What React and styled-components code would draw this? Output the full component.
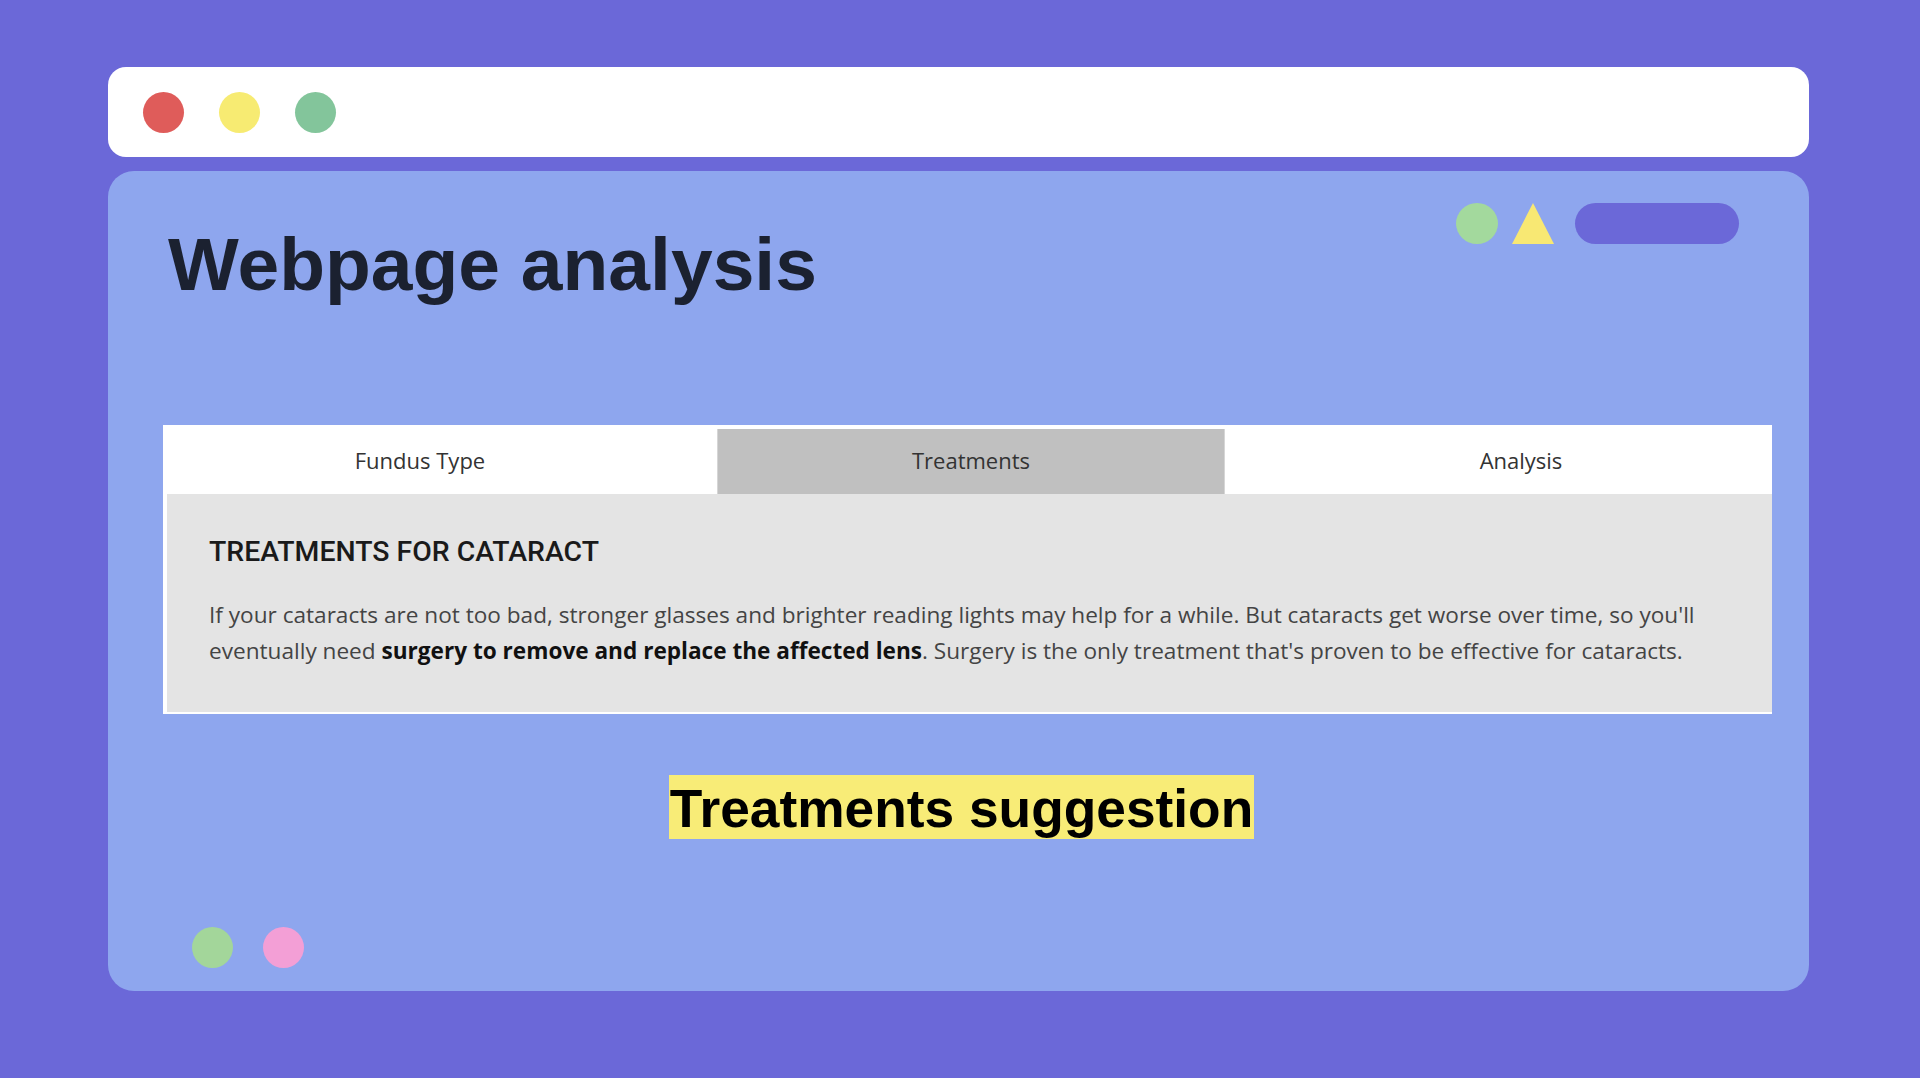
import React, { useState } from "react";
import styled, { createGlobalStyle } from "styled-components";

const GlobalStyle = createGlobalStyle`
  * { box-sizing: border-box; }
  body {
    margin: 0;
    background: #6b68d8;
    font-family: "Liberation Sans", Arial, sans-serif;
  }
`;

const Page = styled.div`
  padding: 67px 0 0 108px;
  min-height: 1078px;
`;

const Window = styled.div`
  width: 1701px;
`;

const TopBar = styled.div`
  height: 90px;
  background: #ffffff;
  border-radius: 18px;
  display: flex;
  align-items: center;
  gap: 35px;
  padding-left: 35px;
`;

const Dot = styled.span`
  width: 41px;
  height: 41px;
  border-radius: 50%;
  background: ${(p) => p.color};
`;

const Panel = styled.main`
  margin-top: 14px;
  height: 820px;
  background: #8ea6ee;
  border-radius: 26px;
  display: flex;
  flex-direction: column;
  padding: 32px 37px 23px 55px;
`;

const Header = styled.header`
  display: flex;
  justify-content: space-between;
  align-items: flex-start;
`;

const Title = styled.h1`
  margin: 24px 0 0 5px;
  font-size: 75px;
  line-height: 74px;
  font-weight: 700;
  color: #1b2130;
`;

const Shapes = styled.div`
  display: flex;
  align-items: center;
  margin-right: 33px;
`;

const Circle = styled.span`
  width: 42px;
  height: 41px;
  border-radius: 50%;
  background: #a3d99d;
  margin-right: 14px;
`;

const Pill = styled.span`
  width: 164px;
  height: 41px;
  border-radius: 21px;
  background: #6b68d8;
  margin-left: 21px;
`;

const Tabs = styled.section`
  margin-top: 124px;
  background: #ffffff;
`;

const TabRow = styled.div`
  display: grid;
  grid-template-columns: 554px 508px 1fr;
  height: 69px;
`;

const Tab = styled.button`
  border: none;
  border-left: 1px solid ${(p) => (p.$active ? "#d6d6d6" : "transparent")};
  border-right: 1px solid ${(p) => (p.$active ? "#d6d6d6" : "transparent")};
  margin-top: ${(p) => (p.$active ? "4px" : "0")};
  background: ${(p) => (p.$active ? "#c0c0c0" : "#ffffff")};
  font-family: "Open Sans", sans-serif;
  font-size: 22px;
  color: #333333;
  cursor: pointer;
  padding: 0 ${(p) => p.$pr || 0}px ${(p) => (p.$active ? 4 : 0)}px
    ${(p) => p.$pl || 0}px;
`;

const Content = styled.div`
  margin: 0 0 2px 4px;
  background: #e4e4e4;
  padding: 42px 42px 43px 42px;
`;

const ContentTitle = styled.h2`
  margin: 0;
  font-family: Roboto, sans-serif;
  font-weight: 500;
  font-size: 28.4px;
  line-height: 32px;
  color: #1a1a1a;
`;

const Text = styled.p`
  margin: 29px 0 0;
  font-family: "Open Sans", sans-serif;
  font-size: 22.6px;
  line-height: 36px;
  color: #444444;

  strong {
    font-weight: 700;
    color: #111111;
  }
`;

const Suggestion = styled.div`
  margin-top: 61px;
  text-align: center;
  padding-right: 12px;
`;

const Highlight = styled.span`
  display: inline-block;
  background: #f8ec77;
  font-size: 53.3px;
  font-weight: 700;
  line-height: 61px;
  padding: 3px 1px 0;
  color: #000000;
`;

const Footer = styled.div`
  margin-top: auto;
  margin-left: 29px;
  display: flex;
  gap: 30px;
`;

const tabs = [
  { id: "fundus", label: "Fundus Type", pr: 40 },
  { id: "treat", label: "Treatments" },
  { id: "analysis", label: "Analysis", pl: 45 },
];

const App = () => {
  const [active, setActive] = useState("treat");

  return (
    <Page>
      <GlobalStyle />
      <Window>
        <TopBar>
          <Dot color="#df5c5a" />
          <Dot color="#f7eb72" />
          <Dot color="#83c59b" />
        </TopBar>

        <Panel>
          <Header>
            <Title>Webpage analysis</Title>
            <Shapes>
              <Circle />
              <svg width="42" height="41" viewBox="0 0 42 41">
                <polygon points="21,0 42,41 0,41" fill="#f8e873" />
              </svg>
              <Pill />
            </Shapes>
          </Header>

          <Tabs>
            <TabRow>
              {tabs.map((t) => (
                <Tab
                  key={t.id}
                  $active={active === t.id}
                  $pl={t.pl}
                  $pr={t.pr}
                  onClick={() => setActive(t.id)}
                >
                  {t.label}
                </Tab>
              ))}
            </TabRow>
            <Content>
              <ContentTitle>TREATMENTS FOR CATARACT</ContentTitle>
              <Text>
                If your cataracts are not too bad, stronger glasses and brighter
                reading lights may help for a while. But cataracts get worse over
                time, so you'll eventually need{" "}
                <strong>surgery to remove and replace the affected lens</strong>.
                Surgery is the only treatment that's proven to be effective for
                cataracts.
              </Text>
            </Content>
          </Tabs>

          <Suggestion>
            <Highlight>Treatments suggestion</Highlight>
          </Suggestion>

          <Footer>
            <Dot color="#a3d69a" />
            <Dot color="#f39fd6" />
          </Footer>
        </Panel>
      </Window>
    </Page>
  );
};

export default App;
